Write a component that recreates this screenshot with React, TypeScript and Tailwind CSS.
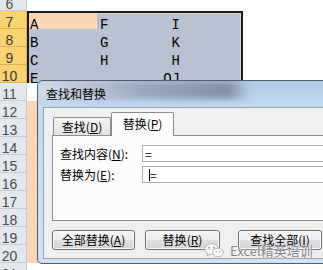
import React from 'react';

const CJK = "font-['Noto_Sans_CJK_SC',sans-serif]";

// 下划线助记符
const Mn = ({ t, k }: { t: string; k: string }) => (
  <>
    {t}(<span className="underline underline-offset-[1px]">{k}</span>)
  </>
);

const Head = ({ n, sel }: { n: number; sel?: boolean }) => (
  <div
    className={
      'flex h-[18px] w-[27px] shrink-0 items-end justify-center border-b border-r pb-[1px] pr-[7px] font-["Liberation_Sans",sans-serif] text-[14px] leading-[10px] ' +
      (sel
        ? 'border-[#dcb15a] bg-[#f8d36f] text-[#3a3a3a]'
        : 'border-[#c5ccd6] bg-[#e3e8ee] text-[#4a4a4a]')
    }
  >
    {n}
  </div>
);

const CELLS = [
  ['A', 'F', 'I'],
  ['B', 'G', 'K'],
  ['C', 'H', 'H'],
  ['E', '', 'OJ'],
];

const BELOW = [11, 12, 13, 14, 15, 16, 17, 18, 19, 20, 21];

const Btn = ({ className, children }: { className: string; children: React.ReactNode }) => (
  <div
    className={
      'flex h-[20px] items-center justify-center rounded-[3px] border border-[#707070] bg-[linear-gradient(to_bottom,#f4f4f4_0%,#ececec_50%,#e0e0e0_50%,#d4d4d4_100%)] text-[12px] leading-none text-black shadow-[inset_0_0_0_1px_#fbfbfb] ' +
      className
    }
  >
    {children}
  </div>
);

const Dialog = () => (
  <div
    className={`absolute left-[37px] top-[80px] flex h-[184px] w-[320px] flex-col overflow-hidden rounded-t-[6px] rounded-b-[5px] border border-[#525d6a] bg-[linear-gradient(to_bottom,#b1cbe9,#c4d9ef_15%,#d4e3f3)] ${CJK}`}
  >
    {/* 玻璃效果：背后表格的模糊 */}
    <div className="pointer-events-none absolute left-0 top-0 h-[18px] w-[212px] bg-[linear-gradient(to_right,#d9dfe7,#98a3b3_50%,#7d899b_90%,transparent)] opacity-90 blur-[3px]" />

    <div className="relative flex h-[26px] shrink-0 items-center pl-[8px] text-[12px] text-black">
      查找和替换
    </div>

    <div className="relative mx-[5px] mb-[4px] flex flex-1 flex-col border border-[#94a6bc] bg-[#f0f0f0] px-[8px]">
      <div className="-mb-px mt-[4px] flex h-[24px] items-end">
        <div className="mb-px ml-[1px] flex h-[18px] w-[58px] items-center justify-center rounded-t-[2px] border border-b-0 border-[#898c95] bg-[linear-gradient(to_bottom,#f3f3f3,#e4e4e4)] pt-[1px] text-[12px] text-black">
          <Mn t="查找" k="D" />
        </div>
        <div className="relative z-10 flex h-[24px] w-[63px] items-center justify-center rounded-t-[2px] border border-b-0 border-[#898c95] bg-[#fcfcfc] pb-[2px] text-[12px] text-black">
          <Mn t="替换" k="P" />
        </div>
      </div>

      <div className="flex h-[86px] flex-col gap-[4px] border border-[#898c95] bg-[#fcfcfc] pl-[7px] pt-[9px]">
        <div className="flex h-[17px] items-center">
          <div className="w-[82px] text-[12px] text-black">
            <Mn t="查找内容" k="N" />:
          </div>
          <div className="flex h-[17px] flex-1 items-center border border-[#abadb3] bg-white pl-[2px] text-[12px] text-black">
            =
          </div>
        </div>
        <div className="flex h-[17px] items-center">
          <div className="w-[82px] text-[12px] text-black">
            <Mn t="替换为" k="E" />:
          </div>
          <div className="flex h-[17px] flex-1 items-center border border-[#abadb3] bg-white text-[12px] text-black">
            <div className="ml-[6px] h-[12px] w-px bg-black" />
            <span>=</span>
          </div>
        </div>
      </div>

      <div className="mt-[9px] flex">
        <Btn className="w-[83px]">
          <Mn t="全部替换" k="A" />
        </Btn>
        <Btn className="ml-[10px] w-[75px]">
          <Mn t="替换" k="R" />
        </Btn>
        <Btn className="ml-[18px] w-[84px]">
          <Mn t="查找全部" k="I" />
        </Btn>
      </div>
    </div>
  </div>
);

const Watermark = () => (
  <div className="pointer-events-none absolute left-[204px] top-[243px] flex items-center">
    <svg width="20" height="15" viewBox="0 0 20 15">
      <ellipse cx="7.5" cy="6" rx="6.8" ry="5.3" fill="#ffffff" fillOpacity="0.8" stroke="#a4a8ae" strokeWidth="0.8" />
      <path d="M3.8 10 L3 13 L6.5 11" fill="#ffffff" fillOpacity="0.8" stroke="#a4a8ae" strokeWidth="0.8" />
      <circle cx="5" cy="4.8" r="1" fill="#9a9ea4" />
      <circle cx="10" cy="4.8" r="1" fill="#9a9ea4" />
      <ellipse cx="14" cy="9.5" rx="5.3" ry="4.3" fill="#ffffff" fillOpacity="0.85" stroke="#a4a8ae" strokeWidth="0.8" />
      <circle cx="12.3" cy="8.8" r="0.8" fill="#9a9ea4" />
      <circle cx="15.7" cy="8.8" r="0.8" fill="#9a9ea4" />
    </svg>
    <span className={`ml-[6px] text-[13px] leading-none text-[#80848b] [text-shadow:0_0_2px_#fff,0_0_1px_#fff] ${CJK}`}>
      Excel精英培训
    </span>
  </div>
);

export default function App() {
  return (
    <div className="relative h-[270px] w-[323px] overflow-hidden bg-white">
      <div className="-mt-[7px] flex flex-col">
        <div className="flex">
          <Head n={6} />
        </div>

        <div className="flex">
          <div className="flex flex-col">
            {[7, 8, 9, 10].map((n) => (
              <Head key={n} n={n} sel />
            ))}
          </div>
          <div className="-mb-[2px] h-[74px] w-[216px] shrink-0 border-2 border-[#111c2c] bg-[#b9c2d0] font-['Liberation_Mono',monospace] text-[14px] leading-[8px] text-black shadow-[inset_-1px_1px_0_#f2cfae]">
            {CELLS.map((r, i) => (
              <div key={i} className={'flex ' + (i === 0 ? 'h-[16px]' : 'h-[18px]')}>
                <div className={'flex w-[68px] items-end pl-[1px] ' + (i === 0 ? 'bg-[#fbd5b4]' : '')}>{r[0]}</div>
                <div className="flex w-[64px] items-end pl-[3px]">{r[1]}</div>
                <div className="flex w-[19px] items-end justify-end">{r[2]}</div>
              </div>
            ))}
          </div>
        </div>

        {BELOW.map((n) => (
          <div key={n} className="flex">
            <Head n={n} />
            <div className={'h-[18px] w-[70px] ' + (n >= 12 && n <= 20 ? 'bg-[#fbd5b4]' : 'bg-white')} />
          </div>
        ))}
      </div>

      <Dialog />
      <Watermark />
    </div>
  );
}
